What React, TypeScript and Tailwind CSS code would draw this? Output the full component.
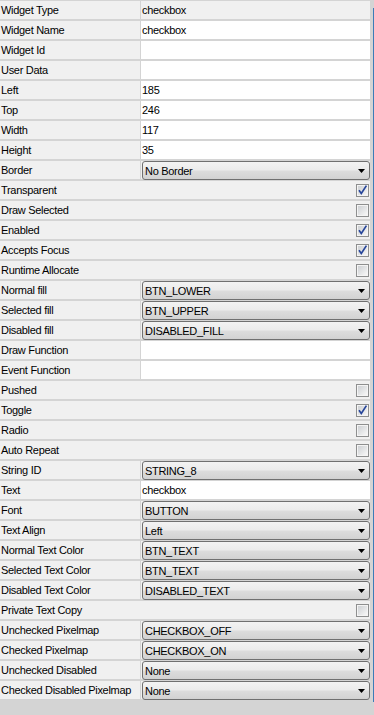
import React from "react";

type Row =
  | { l: string; t: "ro" | "text"; v: string }
  | { l: string; t: "dd"; v: string }
  | { l: string; t: "cb"; v: boolean };

const rows: Row[] = [
  { l: "Widget Type", t: "ro", v: "checkbox" },
  { l: "Widget Name", t: "text", v: "checkbox" },
  { l: "Widget Id", t: "text", v: "" },
  { l: "User Data", t: "text", v: "" },
  { l: "Left", t: "text", v: "185" },
  { l: "Top", t: "text", v: "246" },
  { l: "Width", t: "text", v: "117" },
  { l: "Height", t: "text", v: "35" },
  { l: "Border", t: "dd", v: "No Border" },
  { l: "Transparent", t: "cb", v: true },
  { l: "Draw Selected", t: "cb", v: false },
  { l: "Enabled", t: "cb", v: true },
  { l: "Accepts Focus", t: "cb", v: true },
  { l: "Runtime Allocate", t: "cb", v: false },
  { l: "Normal fill", t: "dd", v: "BTN_LOWER" },
  { l: "Selected fill", t: "dd", v: "BTN_UPPER" },
  { l: "Disabled fill", t: "dd", v: "DISABLED_FILL" },
  { l: "Draw Function", t: "text", v: "" },
  { l: "Event Function", t: "text", v: "" },
  { l: "Pushed", t: "cb", v: false },
  { l: "Toggle", t: "cb", v: true },
  { l: "Radio", t: "cb", v: false },
  { l: "Auto Repeat", t: "cb", v: false },
  { l: "String ID", t: "dd", v: "STRING_8" },
  { l: "Text", t: "text", v: "checkbox" },
  { l: "Font", t: "dd", v: "BUTTON" },
  { l: "Text Align", t: "dd", v: "Left" },
  { l: "Normal Text Color", t: "dd", v: "BTN_TEXT" },
  { l: "Selected Text Color", t: "dd", v: "BTN_TEXT" },
  { l: "Disabled Text Color", t: "dd", v: "DISABLED_TEXT" },
  { l: "Private Text Copy", t: "cb", v: false },
  { l: "Unchecked Pixelmap", t: "dd", v: "CHECKBOX_OFF" },
  { l: "Checked Pixelmap", t: "dd", v: "CHECKBOX_ON" },
  { l: "Unchecked Disabled Pixelmap", t: "dd", v: "None" },
  { l: "Checked Disabled Pixelmap", t: "dd", v: "None" },
];

function CheckBox({ checked }: { checked: boolean }) {
  return (
    <svg width="13" height="13" viewBox="0 0 13 13" className="mr-[1px] mt-[1px] block">
      <rect x="0.5" y="0.5" width="12" height="12" fill="#f4f4f4" stroke="#8e8f8f" />
      <rect x="2" y="2" width="9" height="9" fill="url(#cbgrad)" />
      {checked && (
        <path
          d="M3 6.2 L5.3 9.4 L10.4 1.6"
          stroke="#27469b"
          strokeWidth="1.7"
          fill="none"
          strokeLinejoin="miter"
        />
      )}
    </svg>
  );
}

function Dropdown({ value }: { value: string }) {
  return (
    <div className="relative z-10 ml-[1px] flex h-[19px] w-[228px] items-center rounded-[3px] border border-[#707070] bg-[linear-gradient(#f3f3f3_0%,#ebebeb_48%,#dddddd_52%,#d2d2d2_100%)] pl-[2px] pr-[4px] pt-[1px]">
      <span className="flex-1 whitespace-nowrap">{value}</span>
      <svg width="7" height="4" viewBox="0 0 7 4" className="block">
        <polygon points="0,0 7,0 3.5,4" fill="#000" />
      </svg>
    </div>
  );
}

export default function App() {
  return (
    <div className="flex h-[715px] w-[374px] overflow-hidden bg-[#d4d4d4] font-['Liberation_Sans',Arial,sans-serif] text-[11px] tracking-[-0.3px] text-black">
      <svg width="0" height="0" className="absolute">
        <defs>
          <linearGradient id="cbgrad" x1="0" y1="0" x2="1" y2="1">
            <stop offset="0" stopColor="#cdd0d3" />
            <stop offset="1" stopColor="#f7f7f7" />
          </linearGradient>
        </defs>
      </svg>
      <div className="w-[370px] shrink-0 pt-[1px]">
        {rows.map((r, i) => (
          <div key={i} className="mb-[2px] flex h-[18px]">
            {r.t === "cb" ? (
              <>
                <div className="w-[141px] shrink-0 overflow-hidden bg-[#f0f0f0] pl-[1px] pt-[3px] leading-[13px]">
                  {r.l}
                </div>
                <div className="flex w-[229px] items-center justify-end bg-[#f0f0f0]">
                  <CheckBox checked={r.v} />
                </div>
              </>
            ) : (
              <>
                <div className="w-[140px] shrink-0 overflow-hidden bg-[#f0f0f0] pl-[1px] pt-[3px] leading-[13px]">
                  {r.l}
                </div>
                {r.t === "dd" ? (
                  <div className="ml-[1px] w-[229px] bg-[#f0f0f0]">
                    <Dropdown value={r.v} />
                  </div>
                ) : (
                  <div
                    className={
                      "ml-[1px] w-[229px] pl-[1px] pt-[3px] leading-[13px] " +
                      (r.t === "ro" ? "bg-[#f0f0f0]" : "bg-white")
                    }
                  >
                    {r.v}
                  </div>
                )}
              </>
            )}
          </div>
        ))}
      </div>
      <div className="w-[3px] shrink-0 bg-[#d4d4d4]" />
      <div className="w-[1px] shrink-0 pt-[8px]">
        <div className="h-[694px] bg-[#3b7cb8]" />
      </div>
    </div>
  );
}
